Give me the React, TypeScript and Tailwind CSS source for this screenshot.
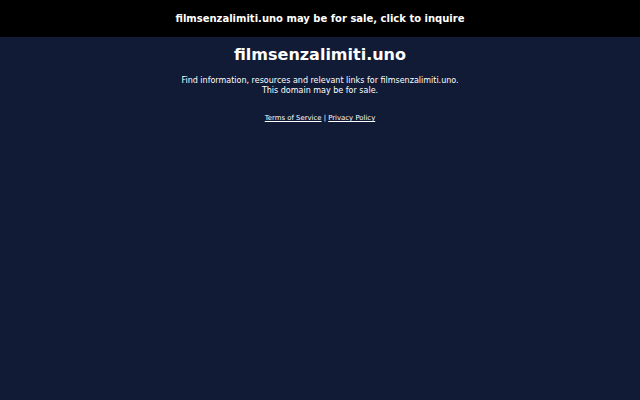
export default function App() {
  return (
    <div className="min-h-screen bg-[#111b36] text-white" style={{ fontFamily: '"DejaVu Sans", sans-serif' }}>
      <div className="h-[37px] bg-black flex items-center justify-center">
        <a className="text-[10px] font-bold text-white">filmsenzalimiti.uno may be for sale, click to inquire</a>
      </div>
      <div className="flex flex-col items-center text-center pt-[8px]">
        <h1 className="text-[16px] font-bold leading-[20px]">filmsenzalimiti.uno</h1>
        <p className="mt-[11px] text-[8px] leading-[10px]">
          Find information, resources and relevant links for filmsenzalimiti.uno.
          <br />
          This domain may be for sale.
        </p>
        <div className="mt-[18px] text-[6.9px] leading-[9px]">
          <a className="underline">Terms of Service</a> | <a className="underline">Privacy Policy</a>
        </div>
      </div>
    </div>
  );
}
